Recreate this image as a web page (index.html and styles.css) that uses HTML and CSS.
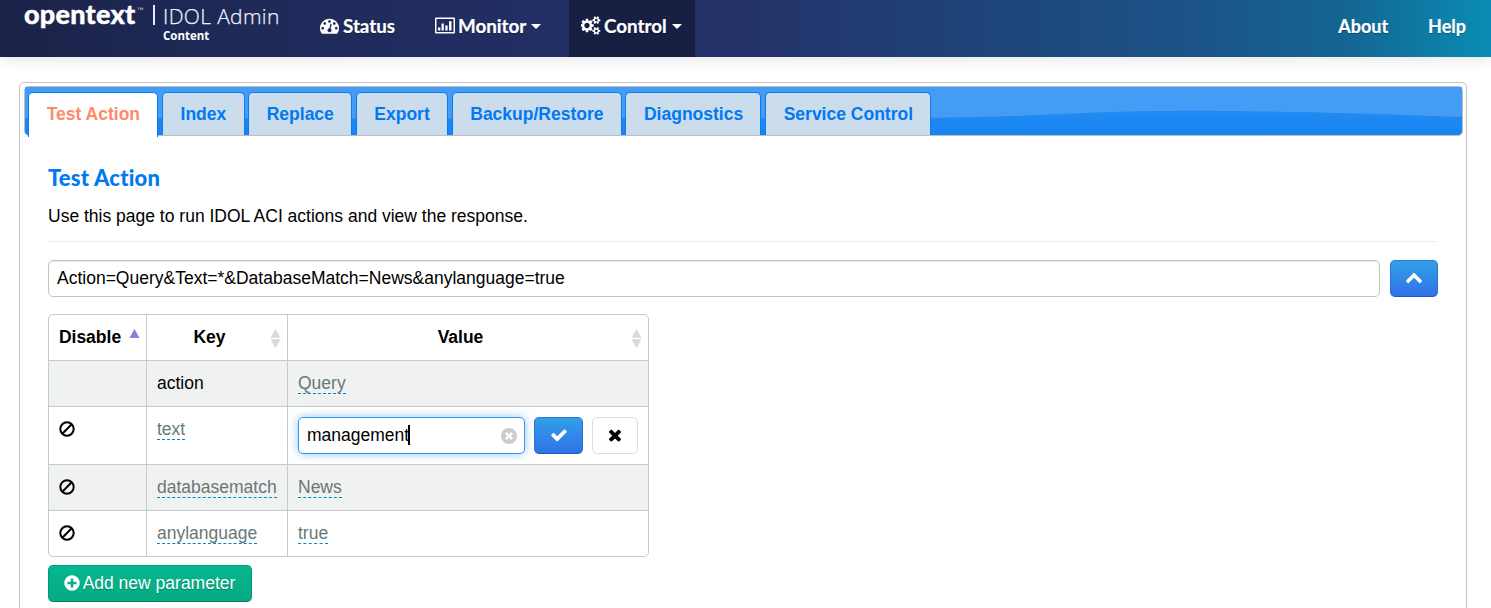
FILE: index.html
```html
<!DOCTYPE html>
<html lang="en">
<head>
<meta charset="utf-8">
<title>IDOL Admin</title>
<link rel="stylesheet" href="styles.css">
</head>
<body>
<header class="navbar">
  <div class="brand">
    <span class="logo">opentext</span><span class="tm">™</span>
    <span class="divider"></span>
    <div class="product"><span class="product-name">IDOL Admin</span><span class="component">Content</span></div>
  </div>
  <nav class="menu">
    <a class="item status"><svg class="ico" viewBox="0 0 1792 1792"><path d="M384 1152q0-53-37.500-90.500t-90.500-37.500-90.500 37.500-37.500 90.500 37.500 90.500 90.500 37.500 90.500-37.500 37.500-90.500zm192-448q0-53-37.500-90.500t-90.500-37.500-90.500 37.500-37.500 90.500 37.500 90.500 90.500 37.500 90.500-37.500 37.500-90.500zm428 481l101-382q6-26-7.500-48.500t-38.500-29.500-48 6.500-30 39.500l-101 382q-60 5-107 43.500t-63 98.500q-20 77 20 146t117 89 146-20 89-117q16-60-6-117t-72-91zm660-33q0-53-37.500-90.500t-90.500-37.500-90.500 37.500-37.500 90.500 37.500 90.500 90.500 37.500 90.500-37.500 37.500-90.500zm-640-640q0-53-37.500-90.500t-90.500-37.500-90.500 37.500-37.500 90.500 37.500 90.500 90.500 37.500 90.500-37.500 37.500-90.500zm448 192q0-53-37.500-90.500t-90.500-37.500-90.500 37.500-37.500 90.500 37.500 90.500 90.500 37.500 90.500-37.500 37.500-90.500zm320 448q0 261-141 483-19 29-54 29h-1402q-35 0-54-29-141-221-141-483 0-182 71-348t191-286 286-191 348-71 348 71 286 191 191 286 71 348z"/></svg><span>Status</span></a>
    <a class="item monitor"><svg class="ico wide" viewBox="0 0 20 18"><path fill-rule="evenodd" d="M1 1h18q1 0 1 1v14q0 1-1 1H1q-1 0-1-1V2q0-1 1-1zM1.500 2.500v13h17v-13zM3 11h2.300v3H3zM6.500 7h2.300v7H6.500zM10.300 9h2.300v5h-2.300zM14 4.800h2.500V14H14z"/></svg><span>Monitor</span><i class="caret"></i></a>
    <a class="item control"><svg class="ico wide" viewBox="0 0 1920 1792"><path d="M832 896q0-106-75-181t-181-75-181 75-75 181 75 181 181 75 181-75 75-181zm768 512q0-52-38-90t-90-38-90 38-38 90q0 53 37.500 90.500t90.500 37.500 90.500-37.500 37.500-90.500zm0-1024q0-52-38-90t-90-38-90 38-38 90q0 53 37.500 90.500t90.500 37.500 90.500-37.500 37.500-90.500zm-384 421v185q0 10-7 19.500t-16 10.500l-155 24q-11 35-32 76 34 48 90 115 7 11 7 20 0 12-7 19-23 30-82.500 89.500t-78.500 59.500q-11 0-21-7l-115-90q-37 19-77 31-11 108-23 155-7 24-30 24h-186q-11 0-20-7.500t-10-17.500l-23-153q-34-10-75-31l-118 89q-7 7-20 7-11 0-21-8-144-133-144-160 0-9 7-19 10-14 41-53t47-61q-23-44-35-82l-152-24q-10-1-17-9.500t-7-19.500v-185q0-10 7-19.500t16-10.500l155-24q11-35 32-76-34-48-90-115-7-11-7-20 0-12 7-20 22-30 82-89t79-59q11 0 21 7l115 90q34-18 77-32 11-108 23-154 7-24 30-24h186q11 0 20 7.500t10 17.500l23 153q34 10 75 31l118-89q8-7 20-7 11 0 21 8 144 133 144 160 0 8-7 19-12 16-42 54t-45 60q23 48 34 82l152 23q10 2 17 10.500t7 19.500zm640 533v140q0 16-149 31-12 27-30 52 51 113 51 138 0 4-4 7-122 71-124 71-8 0-46-47t-52-68q-20 2-30 2t-30-2q-14 21-52 68t-46 47q-2 0-124-71-4-3-4-7 0-25 51-138-18-25-30-52-149-15-149-31v-140q0-16 149-31 13-29 30-52-51-113-51-138 0-4 4-7 4-2 35-20t59-34 30-16q8 0 46 46.500t52 67.500q20-2 30-2t30 2q51-71 92-112l6-2q4 0 124 70 4 3 4 7 0 25-51 138 17 23 30 52 149 15 149 31zm0-1024v140q0 16-149 31-12 27-30 52 51 113 51 138 0 4-4 7-122 71-124 71-8 0-46-47t-52-68q-20 2-30 2t-30-2q-14 21-52 68t-46 47q-2 0-124-71-4-3-4-7 0-25 51-138-18-25-30-52-149-15-149-31v-140q0-16 149-31 13-29 30-52-51-113-51-138 0-4 4-7 4-2 35-20t59-34 30-16q8 0 46 46.500t52 67.500q20-2 30-2t30 2q51-71 92-112l6-2q4 0 124 70 4 3 4 7 0 25-51 138 17 23 30 52 149 15 149 31z"/></svg><span>Control</span><i class="caret"></i></a>
  </nav>
  <nav class="menu right"><a class="about">About</a><a class="help">Help</a></nav>
</header>

<main class="panel">
  <div class="tabbar">
    <svg class="gloss" viewBox="0 0 1437 48" preserveAspectRatio="none"><path d="M0 0H1437V30Q1180 20 1060 26Q960 31 870 31H0z"/></svg>
    <a class="tab active">Test Action</a><a class="tab">Index</a><a class="tab">Replace</a><a class="tab">Export</a><a class="tab">Backup/Restore</a><a class="tab">Diagnostics</a><a class="tab">Service Control</a>
  </div>
  <section class="content">
    <h1 class="title">Test Action</h1>
    <p class="intro">Use this page to run IDOL ACI actions and view the response.</p>
    <div class="command">
      <div class="field">Action=Query&amp;Text=*&amp;DatabaseMatch=News&amp;anylanguage=true</div>
      <button class="btn primary"><svg class="bi" viewBox="0 0 1792 1792"><path d="M1683 1331l-166 165q-19 19-45 19t-45-19l-531-531-531 531q-19 19-45 19t-45-19l-166-165q-19-19-19-45.500t19-45.500l742-741q19-19 45-19t45 19l742 741q19 19 19 45.500t-19 45.500z"/></svg></button>
    </div>
    <div class="params">
      <div class="row head">
        <div class="cell">Disable<svg class="sort asc" viewBox="0 0 11 20"><path d="M5.500 0L10.500 9H.5z"/></svg></div>
        <div class="cell">Key<svg class="sort" viewBox="0 0 11 20"><path d="M5.500 0L10.500 8.700H.5zM.5 10.300h10L5.500 19z"/></svg></div>
        <div class="cell">Value<svg class="sort" viewBox="0 0 11 20"><path d="M5.500 0L10.500 8.700H.5zM.5 10.300h10L5.500 19z"/></svg></div>
      </div>
      <div class="row odd"><div class="cell"></div><div class="cell">action</div><div class="cell"><a class="edit">Query</a></div></div>
      <div class="row editing">
        <div class="cell"><svg class="ban" viewBox="0 0 16 16"><circle cx="8" cy="8" r="6.700"/><path d="M3.300 12.700l9.400-9.400"/></svg></div>
        <div class="cell"><a class="edit">text</a></div>
        <div class="cell form">
          <div class="field focus"><span>management</span><i class="cursor"></i><svg class="clear" viewBox="0 0 16 16"><circle cx="8" cy="8" r="8"/><path d="M4.800 4.800l6.400 6.400M11.200 4.800l-6.400 6.400"/></svg></div>
          <button class="btn primary"><svg class="bi" viewBox="0 0 1792 1792"><path d="M1671 566q0 40-28 68l-724 724-136 136q-28 28-68 28t-68-28l-136-136-362-362q-28-28-28-68t28-68l136-136q28-28 68-28t68 28l294 295 656-657q28-28 68-28t68 28l136 136q28 28 28 68z"/></svg></button>
          <button class="btn plain"><svg class="bi" viewBox="0 0 1792 1792"><path d="M1490 1322q0 40-28 68l-136 136q-28 28-68 28t-68-28l-294-294-294 294q-28 28-68 28t-68-28l-136-136q-28-28-28-68t28-68l294-294-294-294q-28-28-28-68t28-68l136-136q28-28 68-28t68 28l294 294 294-294q28-28 68-28t68 28l136 136q28 28 28 68t-28 68l-294 294 294 294q28 28 28 68z"/></svg></button>
        </div>
      </div>
      <div class="row odd"><div class="cell"><svg class="ban" viewBox="0 0 16 16"><circle cx="8" cy="8" r="6.700"/><path d="M3.300 12.700l9.400-9.400"/></svg></div><div class="cell"><a class="edit">databasematch</a></div><div class="cell"><a class="edit">News</a></div></div>
      <div class="row"><div class="cell"><svg class="ban" viewBox="0 0 16 16"><circle cx="8" cy="8" r="6.700"/><path d="M3.300 12.700l9.400-9.400"/></svg></div><div class="cell"><a class="edit">anylanguage</a></div><div class="cell"><a class="edit">true</a></div></div>
    </div>
    <button class="btn success"><svg class="plus" viewBox="0 0 1792 1792"><path d="M1344 960v-128q0-26-19-45t-45-19h-256v-256q0-26-19-45t-45-19h-128q-26 0-45 19t-19 45v256h-256q-26 0-45 19t-19 45v128q0 26 19 45t45 19h256v256q0 26 19 45t45 19h128q26 0 45-19t19-45v-256h256q26 0 45-19t19-45zm320-64q0 209-103 385.500t-279.500 279.500-385.500 103-385.500-103-279.500-279.500-103-385.500 103-385.500 279.500-279.500 385.500-103 385.500 103 279.500 279.500 103 385.500z"/></svg><span>Add new parameter</span></button>
  </section>
</main>
</body>
</html>
```

FILE: styles.css
```css
* { box-sizing: border-box; }
html { overflow: hidden; }
body { margin: 0; height: 608px; overflow: hidden; background: #fff; color: #000; font: 17.500px/26px "Liberation Sans", Arial, sans-serif; }
svg { display: block; flex: none; }

.navbar { display: flex; height: 57px; color: #fff; background: linear-gradient(90deg, #1b2248 0, #1e2855 180px, #233067 600px, #233369 750px, #1b5488 1200px, #146694 1350px, #0a8cb4 1491px); box-shadow: 0 1px 14px rgba(0,0,0,.13); font-family: Lato, sans-serif; }
.brand { display: flex; width: 308px; padding-left: 24px; }
.logo { width: 113px; height: 30px; font: 900 27px/28px Lato, sans-serif; letter-spacing: .25px; -webkit-text-stroke: .4px #fff; }
.tm { width: 16px; padding-top: 5px; font-size: 9px; line-height: 12px; color: #b8bdd0; }
.divider { width: 2px; height: 20px; margin-top: 5px; background: #e9ebf2; }
.product { display: flex; flex-direction: column; padding-left: 8px; }
.product-name { height: 28px; font: 300 21px/33px "Open Sans", sans-serif; letter-spacing: .35px; color: #f4f5fa; white-space: nowrap; -webkit-text-stroke: .25px #e5e8f2; }
.component { height: 14px; font: 700 11.500px/15px "Open Sans", sans-serif; }
.menu { display: flex; font: 700 18.800px/51px Lato, sans-serif; text-shadow: 0 1px 1px rgba(0,0,0,.3); -webkit-text-stroke: .2px #fff; }
.item { display: flex; align-items: center; height: 57px; padding: 0 12px 6px; }
.item.status { width: 115px; }
.item.monitor { width: 146px; }
.item.control { width: 126px; background: #171f42; }
.ico { width: 19px; height: 19px; margin-right: 4px; fill: #fff; }
.ico.wide { width: 20px; height: 19px; margin-right: 3px; }
.caret { margin: 2px 0 0 5px; border: 5px solid transparent; border-top-color: #fff; border-bottom: 0; }
.menu.right { margin-left: auto; padding-right: 25px; gap: 40px; font-size: 18px; line-height: 52px; }

.panel { margin: 25px 24px 0 19px; height: 526px; padding: 3px 3px 0 4px; border: 1px solid #c5c5c5; border-bottom: 0; border-radius: 5px 5px 0 0; }
.tabbar { position: relative; display: flex; gap: 3.500px; height: 50px; padding: 5px 0 0 3px; border: 1px solid #b9bec3; border-radius: 5px; background: linear-gradient(#2f91f3, #1684f2); }
.gloss { position: absolute; inset: 0; width: 100%; height: 100%; fill: #459cf5; }
.tab { position: relative; height: 43px; padding: 0 17.300px 0 17.700px; border: 1px solid #0a7bf0; border-bottom: 0; border-radius: 5px 5px 0 0; background: #cbdcec; color: #0079f2; font-weight: 700; line-height: 42px; white-space: nowrap; }
.tab.active { height: 45px; background: #fff; color: #ff8a69; }
.content { padding: 27px 26px 0 24px; }
.title { margin: 0; color: #0079f2; font: 900 22px/29px Lato, sans-serif; letter-spacing: .2px; }
.intro { margin: 11px 0 18px; padding-bottom: 11px; border-bottom: 1px solid #eee; line-height: 27px; }
.command { display: flex; gap: 10px; margin-right: -1px; }
.field { flex: 1; height: 37px; padding: 0 8px; border: 1px solid #c5c5c5; border-radius: 5px; background: #fff; line-height: 34px; box-shadow: inset 0 1px 1px rgba(0,0,0,.08); }
.btn { display: flex; align-items: center; justify-content: center; flex: none; height: 37px; margin: 0; padding: 0 0 2px; border: 1px solid; border-radius: 5px; font: 17.500px/33px "Liberation Sans", Arial, sans-serif; }
.primary { width: 48px; border-color: #2b79d5 #2b6fd7 #2357b5; background: linear-gradient(#319fe6, #3073e8); }
.bi { width: 18px; height: 18px; fill: #fff; }
.command .btn { padding-bottom: 4px; }

.params { width: 601px; margin-top: 17px; border: 1px solid #c5c9c9; border-radius: 5px; }
.row { display: grid; grid-template-columns: 97px 141px 361px; height: 46px; border-top: 1px solid #c5c9c9; }
.row.head { height: 45px; border: 0; font-weight: 700; }
.row.odd { background: #f0f2f1; }
.row.editing { height: 58px; }
.cell { display: flex; align-items: flex-start; padding: 9px 10px 0; border-left: 1px solid #c5c9c9; }
.cell:first-child { border-left: 0; }
.head .cell { position: relative; justify-content: center; padding-right: 25px; }
.sort { position: absolute; right: 6px; top: 14px; width: 11px; height: 20px; fill: #d9d9d9; }
.sort.asc { fill: #8080dc; }
.edit { height: 24px; border-bottom: 1px dashed #0088cc; color: #697877; }
.ban { width: 16px; height: 16px; margin-top: 5px; fill: none; stroke: #000; stroke-width: 2; }
.form { padding-top: 10px; }
.focus { display: flex; flex: 0 0 227px; border-color: #3897f0; box-shadow: 0 0 10px rgba(56,151,240,.55); }
.cursor { width: 2px; height: 20px; margin: 7px 0 0 -1px; background: #000; }
.clear { width: 16px; height: 16px; margin: 10px -1px 0 auto; fill: #ccc; }
.clear path { stroke: #fff; stroke-width: 2.500; }
.form .primary { width: 49px; margin-left: 9px; }
.plain { width: 46px; margin-left: 9px; border-color: #ddd; background: #fff; }
.plain .bi { fill: #000; }
.success { width: 204px; margin-top: 8px; gap: 2px; padding: 0 2px 1px 0; border-color: #009c77 #009c77 #008061; background: linear-gradient(#05b88f, #06aa83); color: #fff; text-shadow: 0 1px 1px rgba(0,0,0,.25); }
.success span { line-height: 35px; }
.plus { width: 18px; height: 18px; margin-bottom: 1px; fill: #fff; }
```
